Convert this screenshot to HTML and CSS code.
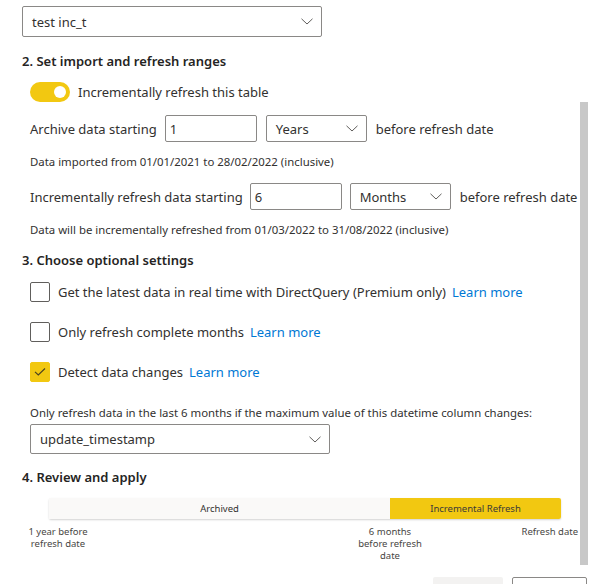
FILE: index.html
```html
<!DOCTYPE html>
<html>
<head>
<meta charset="utf-8">
<link rel="stylesheet" href="styles.css">
</head>
<body>
<div class="panel">
  <div class="select top-select">
    <span>test inc_t</span>
    <svg class="chev" width="12" height="7" viewBox="0 0 12 7"><path d="M0.5 0.8 L6 6 L11.5 0.8" fill="none" stroke="#605e5c" stroke-width="1"/></svg>
  </div>

  <h2 class="heading h-two">2. Set import and refresh ranges</h2>

  <div class="toggle-row">
    <span class="toggle"><span class="knob"></span></span>
    <span class="label">Incrementally refresh this table</span>
  </div>

  <div class="range-row row-one">
    <span class="label">Archive data starting</span>
    <div class="input in-one">1</div>
    <div class="select unit">
      <span>Years</span>
      <svg class="chev" width="12" height="7" viewBox="0 0 12 7"><path d="M0.5 0.8 L6 6 L11.5 0.8" fill="none" stroke="#605e5c" stroke-width="1"/></svg>
    </div>
    <span class="label">before refresh date</span>
  </div>
  <p class="note">Data imported from 01/01/2021 to 28/02/2022 (inclusive)</p>

  <div class="range-row row-two">
    <span class="label">Incrementally refresh data starting</span>
    <div class="input in-two">6</div>
    <div class="select unit">
      <span>Months</span>
      <svg class="chev" width="12" height="7" viewBox="0 0 12 7"><path d="M0.5 0.8 L6 6 L11.5 0.8" fill="none" stroke="#605e5c" stroke-width="1"/></svg>
    </div>
    <span class="label">before refresh date</span>
  </div>
  <p class="note">Data will be incrementally refreshed from 01/03/2022 to 31/08/2022 (inclusive)</p>

  <h2 class="heading h-three">3. Choose optional settings</h2>

  <div class="check-row first-check">
    <span class="box"></span>
    <span class="label">Get the latest data in real time with DirectQuery (Premium only)</span>
    <a class="link">Learn more</a>
  </div>
  <div class="check-row">
    <span class="box"></span>
    <span class="label">Only refresh complete months</span>
    <a class="link">Learn more</a>
  </div>
  <div class="check-row">
    <span class="box checked"><svg width="12" height="10" viewBox="0 0 12 10"><path d="M1 4.8 L4.3 8 L11 1.5" fill="none" stroke="#4a4220" stroke-width="1.1"/></svg></span>
    <span class="label">Detect data changes</span>
    <a class="link">Learn more</a>
  </div>

  <p class="note note-detect">Only refresh data in the last 6 months if the maximum value of this datetime column changes:</p>
  <div class="select col-select">
    <span>update_timestamp</span>
    <svg class="chev" width="12" height="7" viewBox="0 0 12 7"><path d="M0.5 0.8 L6 6 L11.5 0.8" fill="none" stroke="#605e5c" stroke-width="1"/></svg>
  </div>

  <h2 class="heading h-four">4. Review and apply</h2>

  <div class="bar">
    <div class="seg archived">Archived</div>
    <div class="seg incremental">Incremental Refresh</div>
  </div>
  <div class="ticks">
    <span class="tick t1">1 year before<br>refresh date</span>
    <span class="tick t2">6 months<br>before refresh<br>date</span>
    <span class="tick t3">Refresh date</span>
  </div>

  <div class="buttons">
    <span class="btn primary"></span>
    <span class="btn secondary"></span>
  </div>
</div>
<div class="scrollbar"></div>
</body>
</html>
```
FILE: styles.css
```css
html, body {
  margin: 0;
  padding: 0;
  height: 584px;
  overflow: hidden;
  background: #ffffff;
}
body {
  font-family: "Segoe UI", "Noto Sans", "Open Sans", sans-serif;
  color: #323130;
  font-size: 13px;
  position: relative;
}
.panel {
  padding: 6px 0 0 22px;
}
.select {
  box-sizing: border-box;
  border: 1px solid #8a8886;
  border-radius: 2px;
  display: flex;
  align-items: center;
  justify-content: space-between;
  padding: 0 8px 0 9px;
  font-size: 13px;
  color: #323130;
  background: #fff;
}
.top-select {
  width: 300px;
  height: 31px;
}
.heading {
  margin: 0;
  font-size: 13px;
  font-weight: 600;
  line-height: 20px;
  color: #252423;
}
.h-two { margin-top: 14px; }
.h-three { margin-top: 12px; }
.h-four { margin-top: 13px; }
.toggle-row {
  display: flex;
  align-items: center;
  margin: 11px 0 0 8px;
  height: 20px;
  gap: 8px;
}
.toggle {
  width: 40px;
  height: 20px;
  border-radius: 10px;
  background: #f2c811;
  display: flex;
  align-items: center;
  justify-content: flex-end;
  padding-right: 4px;
  box-sizing: border-box;
}
.knob {
  width: 12px;
  height: 12px;
  border-radius: 50%;
  background: #fff;
}
.label {
  font-size: 13px;
  white-space: nowrap;
}
.range-row {
  display: flex;
  align-items: center;
  margin-left: 8px;
  height: 27px;
}
.row-one { margin-top: 13px; }
.row-two { margin-top: 13px; }
.input {
  box-sizing: border-box;
  height: 27px;
  width: 92px;
  border: 1px solid #8a8886;
  border-radius: 2px;
  display: flex;
  align-items: center;
  padding-left: 4px;
  font-size: 13px;
}
.in-one { margin-left: 8px; }
.in-two { margin-left: 7px; }
.unit {
  width: 101px;
  height: 27px;
  margin: 0 9px 0 9px;
}
.row-two .unit { margin-left: 8px; }
.note {
  margin: 12px 0 0 8px;
  font-size: 11.4px;
  line-height: 16px;
  white-space: nowrap;
}
.check-row {
  display: flex;
  align-items: center;
  height: 20px;
  margin: 20px 0 0 8px;
}
.first-check { margin-top: 12px; }
.box {
  box-sizing: border-box;
  width: 20px;
  height: 20px;
  border: 1px solid #605e5c;
  border-radius: 2px;
  margin-right: 8px;
  display: flex;
  align-items: center;
  justify-content: center;
}
.box.checked {
  background: #f2c811;
  border-color: #f2c811;
}
.link {
  color: #0078d4;
  margin-left: 6px;
  font-size: 13px;
  white-space: nowrap;
}
.note-detect { margin-top: 23px; }
.col-select {
  margin: 3px 0 0 8px;
  width: 300px;
  height: 30px;
}
.bar {
  display: flex;
  margin: 11px 0 0 27px;
  width: 512px;
  height: 21px;
  box-shadow: 0 1px 2px rgba(0,0,0,0.18);
  border-radius: 2px;
  font-size: 9.5px;
}
.seg {
  display: flex;
  align-items: center;
  justify-content: center;
}
.archived {
  width: 341px;
  background: #faf9f8;
  color: #323130;
}
.incremental {
  flex: 1;
  background: #f2c811;
  color: #3b3a39;
  border-radius: 0 2px 2px 0;
}
.ticks {
  display: flex;
  margin-top: 7px;
  padding-right: 11px;
  font-size: 9.5px;
  line-height: 12px;
  color: #484644;
}
.tick {
  text-align: center;
}
.t1 {
  width: 72px;
}
.t2 {
  width: 80px;
  margin-left: 256px;
}
.t3 {
  flex: 1;
  text-align: right;
  white-space: nowrap;
}
.buttons {
  display: flex;
  justify-content: flex-end;
  gap: 9px;
  margin-top: 15px;
  padding-right: 2px;
}
.btn {
  height: 28px;
  border-radius: 2px;
  box-sizing: border-box;
}
.primary {
  width: 70px;
  background: #f3f2f1;
}
.secondary {
  width: 75px;
  border: 1px solid #8a8886;
  background: #fff;
}
.scrollbar {
  position: absolute;
  left: 580px;
  top: 102px;
  width: 8px;
  height: 463px;
  background: #c8c8c8;
}
```
